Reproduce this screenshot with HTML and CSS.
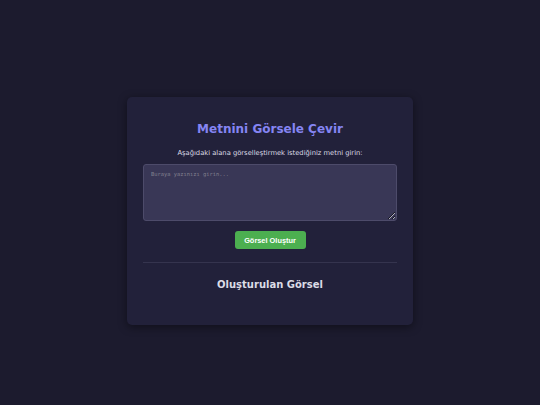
FILE: index.html
```html
<!DOCTYPE html>
<html lang="tr">
<head>
<meta charset="utf-8">
<title>Metnini Görsele Çevir</title>
<link rel="stylesheet" href="styles.css">
</head>
<body>
<main class="card">
  <h1 class="title">Metnini Görsele Çevir</h1>
  <p class="lead">Aşağıdaki alana görselleştirmek istediğiniz metni girin:</p>
  <textarea class="input" placeholder="Buraya yazınızı girin..."></textarea>
  <div class="actions">
    <button class="btn" type="button">Görsel Oluştur</button>
  </div>
  <hr class="divider">
  <h2 class="result-title">Oluşturulan Görsel</h2>
  <div class="result"></div>
</main>
</body>
</html>
```
FILE: styles.css
```css
html, body {
  margin: 0;
  padding: 0;
}
body {
  background: #1c1b2e;
  min-height: 405px;
  padding-top: 97px;
  box-sizing: border-box;
  font-family: "DejaVu Sans", sans-serif;
  color: #e2e2ea;
}
.card {
  box-sizing: border-box;
  width: 286px;
  margin: 0 auto;
  padding: 16px;
  background: #22213a;
  border-radius: 5px;
  box-shadow: 0 2px 10px rgba(0, 0, 0, 0.45);
  display: flex;
  flex-direction: column;
}
.title {
  margin: 9px 0 0;
  font-size: 12px;
  line-height: 14px;
  font-weight: bold;
  text-align: center;
  color: #8585f3;
}
.lead {
  margin: 13px 0 0;
  font-size: 6.75px;
  line-height: 9px;
  text-align: center;
  color: #dcdce6;
}
.input {
  box-sizing: border-box;
  display: block;
  width: 100%;
  height: 57px;
  margin: 6px 0 0;
  padding: 6px 7px;
  background: #393756;
  border: 1px solid #4d4b6a;
  border-radius: 3px;
  font-family: "DejaVu Sans Mono", monospace;
  font-size: 5.4px;
  line-height: 7px;
  color: #dcdce6;
  resize: vertical;
}
.input::placeholder {
  color: #82808f;
}
.actions {
  display: flex;
  justify-content: center;
  margin-top: 10px;
}
.btn {
  width: 71px;
  height: 18px;
  padding: 0;
  border: none;
  border-radius: 3px;
  background: #4caf50;
  color: #ffffff;
  font-family: "Liberation Sans", Arial, sans-serif;
  font-weight: bold;
  font-size: 7.4px;
  cursor: pointer;
}
.divider {
  width: 100%;
  margin: 13px 0 0;
  border: none;
  height: 1px;
  background: #35344e;
}
.result-title {
  margin: 16px 0 0;
  font-size: 10px;
  line-height: 12px;
  font-weight: bold;
  text-align: center;
  color: #dcdce6;
}
.result {
  height: 18px;
}
```
